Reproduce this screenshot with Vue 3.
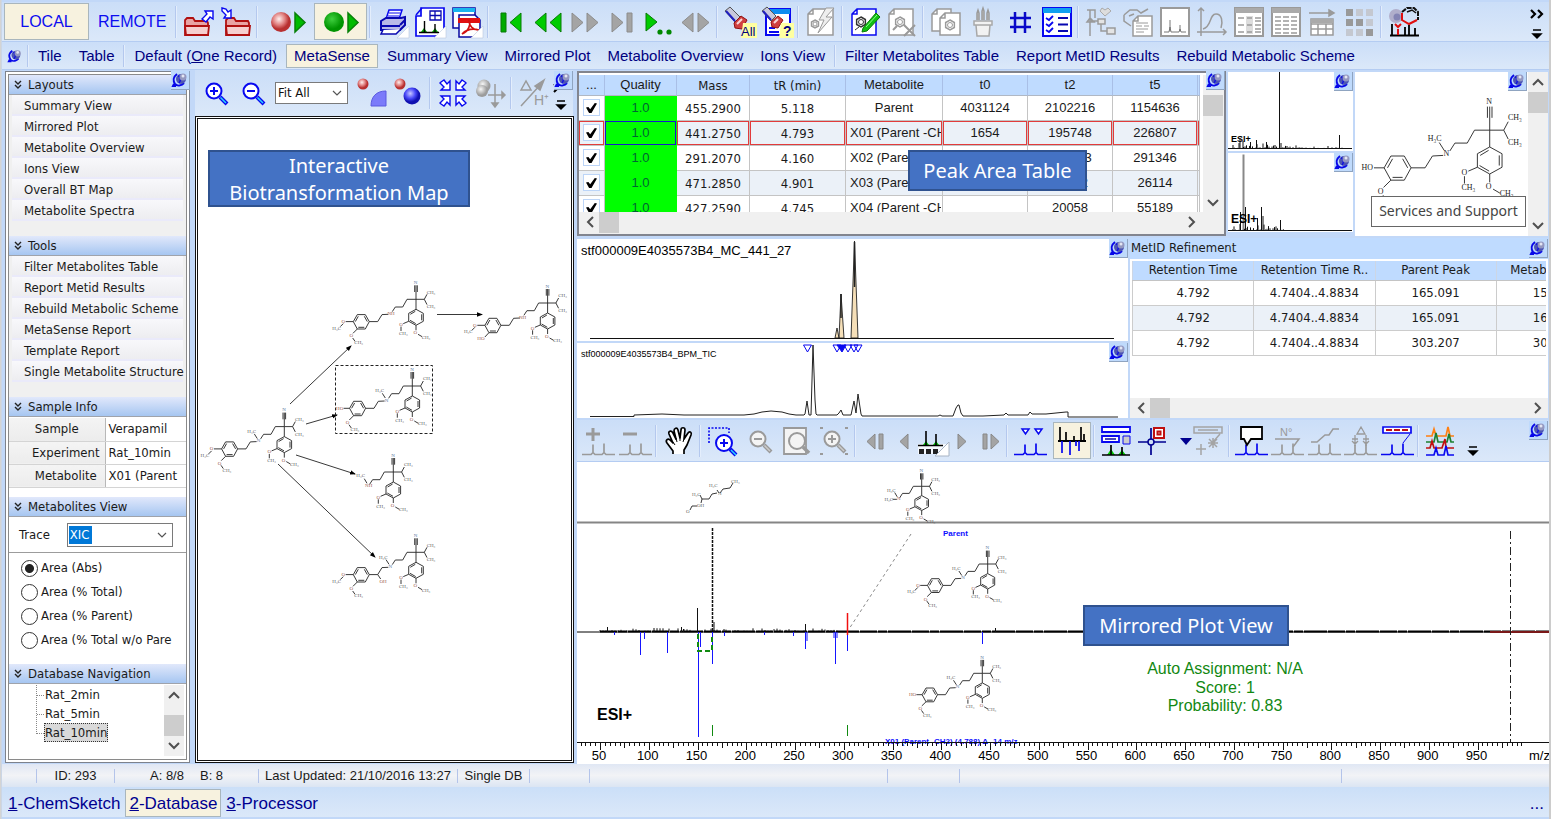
<script setup>
import { h, ref } from 'vue'

const G = '#9a9a9a'
const B = '#0808f0'

const flask = (c, f) => `<circle cx="13" cy="13" r="7.5" fill="${f}" stroke="${c}" stroke-width="2"/><path d="M19 19l7 7" stroke="${c}" stroke-width="4"/><path d="M19.500 19.500l5.500 5.500" stroke="${f === '#f4f4f4' ? '#ccc' : '#2ad4ff'}" stroke-width="1.500"/>`
const peaks = (c) => `<path d="M-1 28.500h9l2-2v-8v8l2 2h7l2-2v-9v9l2 2h9" fill="none" stroke="${c}" stroke-width="1.700"/>`
const page = (x, y, w, hh, c) => `<path d="M${x + 5} ${y}h${w - 5}v${hh}h${-w}v${-(hh - 5)}zM${x + 5} ${y}v5h-5" fill="#fff" stroke="${c}" stroke-width="1.500"/>`
const hexagon = (x, y, r, c) => `<path d="M${x} ${y - r}l${r * 0.87} ${r / 2}v${r}l${-r * 0.87} ${r / 2}l${-r * 0.87} ${-r / 2}v${-r}z" fill="none" stroke="${c}" stroke-width="1.500"/><circle cx="${x}" cy="${y}" r="${r * 0.5}" fill="none" stroke="${c}"/>`
const corner = '<path d="M31 19v12h-12z" fill="#fff" stroke="#b8c8dd" stroke-width=".6"/>'
const folder = (x, y) => `<path d="M${x} ${y + 17}v-15l2-2h6l2 3h12l1 2v12z" fill="#e9a3a3" stroke="#b01010" stroke-width="1.800"/><path d="M${x + 1} ${y + 17}l-1-9h24l-1 9z" fill="#f6cfcf" stroke="#b01010" stroke-width="1.800"/>`

const icons = {
  folderOut: folder(1, 11) + '<path d="M18 12l5-5-2-3h8v8l-3-2-4 5z" fill="#fff" stroke="#0808f0" stroke-width="1.400"/>',
  folderIn: folder(5, 11) + '<path d="M1 1l4 1 2 3 3-2v8H3l2-3-4-4z" fill="#fff" stroke="#0808f0" stroke-width="1.400"/>',
  recordRed: '<circle cx="8" cy="15" r="10" fill="url(#ballRed)"/><path d="M22 6v19l10-9.500z" fill="#0b0" stroke="#088008" stroke-width="1.500"/>',
  recordGreen: '<circle cx="8" cy="15" r="10" fill="url(#ballGreen)"/><path d="M22 6v19l10-9.500z" fill="#0b0" stroke="#088008" stroke-width="1.500"/>',
  printer: '<path d="M8 12L11 3h13l-3 9z" fill="#fff" stroke="#0808f0" stroke-width="1.500"/><path d="M11 6h11M10 9h11" stroke="#0808f0"/><path d="M3 14l5-3h15l4-1v8l-5 5H3z" fill="#b9b9e8" stroke="#0808b0" stroke-width="2"/><path d="M2 19h20M22 18l5-5" stroke="#0808b0" stroke-width="2"/><path d="M5 23l-2 4h15l5-5" fill="#fff" stroke="#0808b0" stroke-width="1.500"/>' + corner,
  report: '<path d="M1 29V9h5V1h23v28z" fill="#fff" stroke="#0808f0" stroke-width="1.700"/><path d="M1 8l6-7" stroke="#0808f0" stroke-width="1.500"/><path d="M15 4h11v9H15zM15 8.500h11M20 4v9" fill="none" stroke="#0808b0" stroke-width="1.300"/><path d="M6 25l3-4 3 4zM17 25l3-4 3 4z" fill="#0a0"/><path d="M4 25.500h20M9.500 14v11M20 17v8" stroke="#000" stroke-width="1.400"/>' + corner,
  pdf: '<path d="M1 1h22v20H1z" fill="#fff" stroke="#0808a0" stroke-width="1.500"/><path d="M1 1h22v4H1z" fill="#19b5ef"/><path d="M7 8h16l5 5v17H7z" fill="#fff" stroke="#0808a0" stroke-width="1.500"/><path d="M6 11h22v5H6z" fill="#e01010"/><path d="M10 27c7-3 9-10 7-14 0 6 4 10 10 10-7-2-13 0-17 4" fill="none" stroke="#d01010" stroke-width="1.700"/>' + corner,
  first: '<path d="M5 6h5v19H5z" fill="#0a0" stroke="#077a07"/><path d="M25 6v19l-11-9.500z" fill="#0c0" stroke="#077a07"/>',
  back: '<path d="M13 6v19L2 15.500zM28 6v19l-11-9.500z" fill="#0c0" stroke="#077a07"/>',
  fwd: '<path d="M2 6v19l11-9.500zM17 6v19l11-9.500z" fill="#a4a4a4" stroke="#8c8c8c"/>',
  last: '<path d="M5 6v19l11-9.500zM20 6h5v19h-5z" fill="#a4a4a4" stroke="#8c8c8c"/>',
  playDots: '<path d="M2 6v18l11-9z" fill="#0c0" stroke="#077a07"/><circle cx="16" cy="25" r="2.600" fill="#080"/><circle cx="25" cy="25" r="2.600" fill="#080"/>',
  leftRight: '<path d="M12 6v19L1 15.500zM17 6v19l11-9.500z" fill="#a4a4a4" stroke="#8c8c8c"/>',
  findAll: '<path d="M0 4l5-4 10 10-5 5z" fill="#c8c8dc" stroke="#555"/><path d="M1 4l9 10" stroke="#2020c0" stroke-width="2"/><path d="M9 16l7-7 6 4-5 9-7-1z" fill="#d04040" stroke="#901010"/><path d="M12 17l5-5" stroke="#f8d8d8" stroke-width="2"/><path d="M18 16h14v15H16z" fill="#ffffa0"/><text x="16" y="29" font-family="Liberation Sans, sans-serif" font-size="13" fill="#000080">All</text>',
  findHelp: '<path d="M4 2h24v26H4z" fill="#fff" stroke="#0808f0" stroke-width="2"/><path d="M4 2h24v5H4z" fill="#0d8cf0"/><path d="M7 25h10M7 21h6" stroke="#0808f0" stroke-width="2"/><path d="M0 4l5-4 9 9-5 5z" fill="#c8c8dc" stroke="#555"/><path d="M1 4l8 9" stroke="#2020c0" stroke-width="2"/><path d="M9 15l7-6 5 4-5 8-6-1z" fill="#d04040" stroke="#901010"/><path d="M12 16l4-4" stroke="#f8d8d8" stroke-width="2"/><path d="M19 16h13v15H17z" fill="#ffffa0"/><text x="21" y="29" font-family="Liberation Sans, sans-serif" font-weight="bold" font-size="14" fill="#000080">?</text>',
  docBolt: page(2, 2, 25, 26, G) + '<path d="M20 1l-7 12h5l-6 13 14-16h-6l8-9z" fill="#eee" stroke="#9a9a9a"/>' + hexagon(9, 17, 4, G),
  docEdit: page(2, 2, 24, 26, B) + hexagon(11, 15, 5, '#333') + '<path d="M5 23l4-3" stroke="#333"/><path d="M13 21L26 6l4 4-13 14-5 1z" fill="#12c012" stroke="#077a07"/><path d="M16 20L27 8" stroke="#8f8"/>',
  docDelete: page(2, 2, 24, 26, G) + hexagon(13, 15, 5, G) + '<path d="M6 23l4-4M17 18l11 11M28 18l-11 11" stroke="#9a9a9a" stroke-width="2"/>',
  docs: page(1, 2, 19, 22, G) + page(9, 6, 20, 22, G) + hexagon(19, 18, 5, G),
  pens: '<path d="M6 14h18v4H6zM8 18h14l-1 11H9z" fill="#f2f2f2" stroke="#a8a8a8" stroke-width="1.500"/><path d="M9 13V6l1-3 1 3v7M14 13V4l1-3 1 3v9M19 13V6l1-3 1 3v7" fill="#ccc" stroke="#9a9a9a" stroke-width="1.500"/>',
  hash: '<path d="M10 5v21M20 5v21M5 11h21M5 20h21" stroke="#0808c8" stroke-width="2.500" fill="none"/>',
  checklist: '<path d="M1 1h28v28H1z" fill="#fff" stroke="#0808f0" stroke-width="2"/><path d="M1 1h28v5H1z" fill="#10a0f0"/><path d="M4 11l3 2 4-4M4 17l3 2 4-4M4 23l3 2 4-4" fill="none" stroke="#0808f0" stroke-width="1.800"/><path d="M16 11h10M16 17.500h10M16 24h10" stroke="#0808b0" stroke-width="2"/>',
  tree: '<path d="M1 3h8v8M4 3v26M4 14h8M4 11l-3 4h7zM15 14v10h6" fill="none" stroke="#9a9a9a" stroke-width="1.500"/><path d="M19 9l-5-5 2-3 3 2 3-2 3 3z" fill="#ddd" stroke="#aaa"/><path d="M12 12h7v5h-7zM21 21h8v6h-8z" fill="#e4e4e4" stroke="#9a9a9a" stroke-width="1.500"/>',
  hexDoc: '<path d="M1 8l6-5h7l4 3 7-4M1 8v6l7 5M6 9l5-2" fill="none" stroke="#9a9a9a" stroke-width="1.500"/>' + page(10, 9, 19, 20, G) + '<path d="M13 16h12M13 19h6M21 19h5M13 22h12M13 25h8" stroke="#9a9a9a"/>',
  chart: '<path d="M1 1h28v28H1z" fill="#fff" stroke="#9a9a9a" stroke-width="2"/><path d="M4 25h5l1-5 1 5h8l1-3 1 3h5M10 13v11M20 18v6" fill="none" stroke="#777"/>',
  curve: '<path d="M4 1v28M0 25h29M26 22l3 3-3 3M1 4l3-3 3 3" fill="none" stroke="#9a9a9a" stroke-width="1.500"/><path d="M6 22c9-2 6-15 13-15 6 0 7 8 5 14" fill="none" stroke="#9a9a9a" stroke-width="1.500"/>',
  form: '<path d="M1 1h28v28H1z" fill="#fff" stroke="#9a9a9a" stroke-width="2"/><path d="M1 1h28v5H1z" fill="#aaa"/><path d="M12 9h7v18h-7z" fill="#ddd"/><path d="M4 11h6M4 18h6M4 25h6M13 11h5M13 18h5M13 25h5M21 11h6M21 14h6M21 18h6M21 22h6M21 25h6" stroke="#9a9a9a" stroke-width="1.500"/>',
  list: '<path d="M1 1h28v28H1z" fill="#fff" stroke="#9a9a9a" stroke-width="2"/><path d="M1 1h28v5H1z" fill="#aaa"/><path d="M4 10h6M4 14h6M4 18h6M4 22h6M4 26h6M12 10h6M12 14h6M12 18h6M12 22h6M12 26h6M20 10h6M20 14h6M20 18h6M20 22h6M20 26h6" stroke="#9a9a9a" stroke-width="1.500"/>',
  insertTable: '<path d="M1 6h21M21 3l5 3-5 3z" fill="#9a9a9a" stroke="#9a9a9a" stroke-width="1.500"/><path d="M3 12h22v16H3zM3 17h22M3 22h22M10 17v11M18 17v11" fill="#fff" stroke="#9a9a9a" stroke-width="1.500"/><path d="M3 12h22v4H3z" fill="#aaa"/>',
  gridDots: '<path d="M1 2h7v7H1zM1 12h7v7H1zM11 12h7v7h-7zM21 22h7v7h-7z" fill="#999"/><path d="M11 2h7v7h-7zM21 2h7v7h-7zM21 12h7v7h-7zM1 22h7v7H1zM11 22h7v7h-7z" fill="#c4c8d0"/>',
  target: '<circle cx="7" cy="9" r="7" fill="#b0aecb"/><circle cx="8" cy="10" r="3.500" fill="#8484b4"/><path d="M13 5l5-4h7l4 4v8" fill="none" stroke="#111" stroke-width="2" stroke-dasharray="5 1"/><path d="M18 5l5-2 4 3" fill="none" stroke="#111" stroke-width="1.500"/><path d="M13 6v7l7 4 8-4" fill="none" stroke="#e01010" stroke-width="2"/><path d="M1 28.500h29M3 17v11M16 20v8M20 18v10M26 21v7" stroke="#000" stroke-width="1.800"/><path d="M9 28v-6M6 17l3 3 3-3" stroke="#e01010" stroke-width="2" fill="none"/>',
  zoomIn: flask(B, '#fff') + '<path d="M9 13h8M13 9v8" stroke="#0808f0" stroke-width="2"/>',
  zoomOut: flask(B, '#fff') + '<path d="M9 13h8" stroke="#0808f0" stroke-width="2"/>',
  ballQuarter: '<circle cx="6" cy="6" r="5.500" fill="url(#ballRed)"/><path d="M14 28c0-9 5-15 15-15v15z" fill="#7b7bfa" stroke="#5a5ae0"/>',
  balls: '<circle cx="6" cy="6" r="5.500" fill="url(#ballRed)"/><circle cx="18" cy="18" r="8.500" fill="url(#ballBlue)"/>',
  collapse: '<path d="M3 4l3-2 3 4 3-3v9H3l3-3-4-4zM27 4l-3-2-3 4-3-3v9h9l-3-3 4-4zM3 26l3 2 3-4 3 3v-9H3l3 3-4 4zM27 26l-3 2-3-4-3 3v-9h9l-3 3 4 4z" fill="#fff" stroke="#0808f0" stroke-width="1.400"/>',
  ballMove: '<circle cx="9" cy="8" r="6.500" fill="url(#ballGray)"/><circle cx="7" cy="13" r="6" fill="url(#ballGray)"/><path d="M20 6v21M13 17h15M17 25l3 4 3-4zM27 14l3 3-3 3z" stroke="#9a9a9a" stroke-width="1.500" fill="#9a9a9a"/>',
  deltaH: '<path d="M2 12l5-9 5 9z" fill="none" stroke="#9a9a9a" stroke-width="1.500"/><path d="M2 28L22 6M25 2l-9 6 5 4z" stroke="#9a9a9a" stroke-width="1.500" fill="#9a9a9a"/><text x="15" y="27" font-family="Liberation Sans, sans-serif" font-size="14" fill="#9a9a9a">H⁺</text>',
  plusPeaks: '<path d="M3 8h14M10 2v13" stroke="#9a9a9a" stroke-width="3"/>' + peaks(G),
  minusPeaks: '<path d="M3 8h14" stroke="#9a9a9a" stroke-width="3"/>' + peaks(G),
  hand: '<path d="M9 28v-3L3 17c-2-3 1-5 3-3l3 3L5 8c-1-3 2-4 4-1l3 6-2-8c0-3 3-4 4-1l2 8 1-8c0-3 4-3 4 0l-1 9 4-6c2-2 4-1 3 2l-4 10-3 5v4" fill="#fff" stroke="#000" stroke-width="1.700" stroke-linejoin="round"/><path d="M9 16l2 3M12 12l1 4M16 11v4M20 13l-1 3" stroke="#000"/>',
  zoomRect: '<path d="M1 17V2h20v5" fill="none" stroke="#0808f0" stroke-width="1.600" stroke-dasharray="2 1.500"/><circle cx="16" cy="17" r="8" fill="#fff" stroke="#0808f0" stroke-width="2"/><path d="M12 17h8M16 13v8" stroke="#0808f0" stroke-width="2"/><path d="M22 23l6 6" stroke="#0808f0" stroke-width="4"/><path d="M23 24l5 5" stroke="#2ad4ff" stroke-width="1.500"/>',
  zoomOutOff: flask(G, '#f4f4f4') + '<path d="M9 13h8" stroke="#9a9a9a" stroke-width="2"/>',
  zoomPage: '<path d="M2 2h22v26H2z" fill="#f4f4f4" stroke="#9a9a9a" stroke-width="1.800"/><circle cx="15" cy="15" r="8" fill="#f4f4f4" stroke="#9a9a9a" stroke-width="2"/><path d="M21 21l6 6" stroke="#9a9a9a" stroke-width="3.500"/>',
  zoomInOff: flask(G, '#f4f4f4') + '<path d="M9 13h8M13 9v8M1 2h3M1 28h3M26 2h3M26 28h3" stroke="#9a9a9a" stroke-width="2"/>',
  navFirst: '<path d="M15 8v15L7 15.500zM19 8h4v15h-4z" fill="#a4a4a4" stroke="#888"/>',
  navPrev: '<path d="M19 8v15l-8-7.500z" fill="#a4a4a4" stroke="#888"/>',
  navPeaks: '<path d="M0 18h30v10H0z" fill="#f4f8fd"/><path d="M5 19l3-4 3 4zM15 19l3-4 3 4z" fill="#0c0"/><path d="M0 19.500h25M8 5v14M18 8v11" stroke="#000" stroke-width="1.600"/><path d="M1 23h5v5H1zM8 23h5v5H8zM15 23h5v5h-5z" fill="#222"/><path d="M31 16v14H17z" fill="#fff" stroke="#a8b4c4"/>',
  navNext: '<path d="M11 8v15l8-7.500z" fill="#a4a4a4" stroke="#888"/>',
  navLast: '<path d="M7 8h4v15H7zM15 8v15l8-7.500z" fill="#a4a4a4" stroke="#888"/>',
  markPeaks: '<path d="M7 3h7l-3.500 5zM20 3h7l-3.500 5z" fill="#fff" stroke="#0808f0" stroke-width="1.500"/>' + peaks(B),
  mirror: '<path d="M1 15h28" stroke="#000" stroke-width="2"/><path d="M3 1v14M9 6v9M17 10v5M24 1v14M27 8v7" stroke="#000" stroke-width="1.700"/><path d="M5 15v12M13 15v14M19 15v5M22 15v10" stroke="#0808f0" stroke-width="1.700"/>',
  panels: '<path d="M1 1h28v5H1zM1 10h17v6H1z" fill="#fff" stroke="#0808f0" stroke-width="1.800"/><path d="M22 10h7v8h-7z" fill="#ccc" stroke="#0808f0"/><path d="M4 13h11" stroke="#0808a0" stroke-width="1.500"/><path d="M6 29l4-6 4 6zM17 29l4-5 4 5z" fill="#0c0"/><path d="M1 29h28M10 19v10M21 21v8" stroke="#000" stroke-width="1.700"/>',
  crosshair: '<path d="M1 16h28M14 2v27" stroke="#000090" stroke-width="1.700"/><circle cx="14" cy="16" r="3" fill="#cfe0f7" stroke="#000090" stroke-width="1.500"/><path d="M17 2h10v10H17zM20.500 5.500h3v3h-3z" fill="#fff" stroke="#c01010" stroke-width="2"/>',
  caret: '<path d="M9 12h12l-6 7z" fill="#000090"/>',
  labelOff: '<path d="M1 1h28v6H1zM5 4h20M27 8l-7 8M15 17h10M20 12v10M16 13l8 8M24 13l-8 8M3 23h10M8 18v11" fill="none" stroke="#a4a4a4" stroke-width="1.500"/>',
  callout: peaks(B) + '<path d="M5 1h21v12H15l-4 6-3-6H5z" fill="#fff" stroke="#000" stroke-width="1.800"/>',
  number: peaks(G) + '<text x="8" y="10" font-family="Liberation Sans, sans-serif" font-size="11" fill="#9a9a9a">N°</text><path d="M3 13h24l-6 8" fill="none" stroke="#9a9a9a" stroke-width="1.500"/>',
  integral: peaks(G) + '<path d="M2 16h6l8-7h4l4-6h6" fill="none" stroke="#9a9a9a" stroke-width="1.500"/>',
  delta: peaks(G) + '<path d="M12 8l4-7 4 7zM10 9v11M7 13h6M7 15l3 3 3-3M21 9v11M18 13h6M18 15l3 3 3-3" fill="none" stroke="#9a9a9a" stroke-width="1.300"/>',
  labelPeak: peaks(B) + '<path d="M1 1h28v6H1z" fill="#fff" stroke="#0808f0" stroke-width="1.700"/><path d="M4 4h22" stroke="#c01010" stroke-width="1.800" stroke-dasharray="6 2"/><path d="M28 8l-7 9" stroke="#0808f0" fill="none"/>',
  overlay: '<g fill="none" stroke-width="1.700"><path d="M1 10h6l2-7 2 7h10l2-9 2 9h4" stroke="#ff7f11"/><path d="M1 16h8l2-9 2 9h9l2-8 2 8h3" stroke="#1e8030"/><path d="M1 22h4l2-7 2 7h8l3-9 1 9h8" stroke="#c01010"/><path d="M1 29h8l2-7 2 7h6l2-9 2 9h6" stroke="#0808f0"/></g>'
}

const mainTools = [
  [['folderOut', 'Open'], ['folderIn', 'Save']],
  [['recordRed', 'Run once', 'wide'], ['recordGreen', 'Run', 'wide active']],
  [['printer', 'Print'], ['report', 'Report'], ['pdf', 'Export PDF']],
  [['first', 'First'], ['back', 'Back'], ['fwd', 'Forward'], ['last', 'Last'], ['playDots', 'Go to'], ['leftRight', 'Swap']],
  [['findAll', 'Find all'], ['findHelp', 'Query']],
  [['docBolt', 'Quick structure']],
  [['docEdit', 'Edit structure'], ['docDelete', 'Delete structure']],
  [['docs', 'Copy'], ['pens', 'Annotate'], ['hash', 'Number'], ['checklist', 'Checklist']],
  [['tree', 'Tree'], ['hexDoc', 'Structure report'], ['chart', 'Spectrum'], ['curve', 'Curve'], ['form', 'Form'], ['list', 'List'], ['insertTable', 'Insert table'], ['gridDots', 'Grid']],
  [['target', 'Assign']]
]

const plotTools = [
  [['plusPeaks', 'Add peaks'], ['minusPeaks', 'Remove peaks']],
  [['hand', 'Pan']],
  [['zoomRect', 'Zoom area'], ['zoomOutOff', 'Zoom out'], ['zoomPage', 'Full view'], ['zoomInOff', 'Previous zoom']],
  [['navFirst', 'First spectrum', 'nav'], ['navPrev', 'Previous spectrum', 'nav'], ['navPeaks', 'Select spectrum', 'nav'], ['navNext', 'Next spectrum', 'nav'], ['navLast', 'Last spectrum', 'nav']],
  [['markPeaks', 'Mark peaks'], ['mirror', 'Mirror', 'framed active']],
  [['panels', 'Panels', 'tight'], ['crosshair', 'Crosshair', 'tight'], ['caret', 'More', 'drop'], ['labelOff', 'Label', 'tight']],
  [['callout', 'Callout', 'tight'], ['number', 'Number peaks', 'tight'], ['integral', 'Integral'], ['delta', 'Difference', 'tight'], ['labelPeak', 'Label peak']],
  [['overlay', 'Overlay', 'tight']]
]

const layoutTabs = [
  ['Tile', 'Table'],
  ['Default (One Record)', 'MetaSense', 'Summary View', 'Mirrored Plot', 'Metabolite Overview', 'Ions View'],
  ['Filter Metabolites Table', 'Report MetID Results', 'Rebuild Metabolic Scheme']
]
const activeTab = ref('MetaSense')

const menus = [
  { title: 'Layouts', items: ['Summary View', 'Mirrored Plot', 'Metabolite Overview', 'Ions View', 'Overall BT Map', 'Metabolite Spectra'] },
  { title: 'Tools', items: ['Filter Metabolites Table', 'Report Metid Results', 'Rebuild Metabolic Scheme', 'MetaSense Report', 'Template Report', 'Single Metabolite Structure'] }
]
const sample = [['Sample', 'Verapamil'], ['Experiment', 'Rat_10min'], ['Metabolite', 'X01 (Parent']]
const areas = ['Area (Abs)', 'Area (% Total)', 'Area (% Parent)', 'Area (% Total w/o Pare']
const area = ref(areas[0])

const peakHead = ['...', 'Quality', 'Mass', 'tR (min)', 'Metabolite', 't0', 't2', 't5', '']
const peakRows = [
  ['455.2900', '5.118', 'Parent', '4031124', '2102216', '1154636'],
  ['441.2750', '4.793', 'X01 (Parent -CH2)', '1654', '195748', '226807'],
  ['291.2070', '4.160', 'X02 (Parent -CH2)', '', '306223', '291346'],
  ['471.2850', '4.901', 'X03 (Parent -CH2)', '', '18512', '26114'],
  ['427.2590', '4.745', 'X04 (Parent -CH2)', '', '20058', '55189']
]
const metHead = ['Retention Time', 'Retention Time R..', 'Parent Peak', 'Metabolite Peak']
const metRows = [
  ['4.792', '4.7404..4.8834', '165.091', '151.075'],
  ['4.792', '4.7404..4.8834', '165.091', '165.091'],
  ['4.792', '4.7404..4.8834', '303.207', '303.207']
]

/* Structure drawings: coordinates are relative to the quaternary carbon. */
const Molecule = (p) => {
  const s = p.s
  const seg = []
  const lab = []
  const line = (...pts) => seg.push('M' + pts.map(([x, y]) => `${(p.x + x * s).toFixed(1)} ${(p.y + y * s).toFixed(1)}`).join('L'))
  const text = (x, y, t, tint) => lab.push([p.x + x * s, p.y + y * s, t, tint])
  const nBlue = '#5878a0'
  const oRed = '#9a5a50'
  const cGrey = '#606064'
  line([0, 30], [0, 0], [0, -42])
  line([-4, -22], [-4, -42])
  line([4, -22], [4, -42])
  text(-1, -51, 'N', nBlue)
  line([0, 0], [25, 0], [33, -15])
  line([25, 0], [33, 16])
  text(45, -22, 'CH₃', cGrey)
  text(45, 22, 'CH₃', cGrey)
  line([0, 0], [-27, 0], [-40, 23], [-62, 23], [-71, 37])
  line([0, 30], [22, 42], [22, 66], [0, 78], [-22, 66], [-22, 42], [0, 30])
  line([17, 45], [17, 63])
  line([-1, 73], [-18, 63])
  line([-17, 45], [-2, 36])
  line([-22, 66], [-38, 73])
  text(-45, 75, 'O', oRed)
  line([-45, 82], [-45, 95])
  text(-38, 102, 'CH₃', cGrey)
  line([0, 78], [0, 93])
  text(-2, 100, 'O', oRed)
  line([6, 105], [18, 112])
  text(30, 113, 'CH₃', cGrey)
  if (p.kind === 'short' || p.kind === 'dimethyl') {
    text(-74, 40, p.kind === 'short' ? 'NH' : 'N', oRed)
    text(-98, p.kind === 'short' ? 10 : 14, 'H₃C', cGrey)
    line([-87, 20], [-79, 34])
    if (p.kind === 'dimethyl') {
      line([-94, 42], [-80, 42])
      text(-106, 42, 'H₃C', cGrey)
    }
  } else {
    if (p.nh) text(-75, 43, 'NH', oRed)
    else {
      text(-77, 42, 'N', nBlue)
      line([-90, 22], [-81, 36])
      text(-98, 14, 'H₃C', cGrey)
    }
    line([-83, 45], [-102, 46], [-115, 67], [-140, 67], [-152, 46], [-176, 46], [-188, 67], [-176, 89], [-152, 89], [-140, 67])
    line([-155, 51], [-146, 67])
    line([-173, 51], [-182, 67])
    line([-173, 84], [-155, 84])
    if (p.kind === 'hoLeft') {
      line([-188, 67], [-206, 67])
      text(-218, 67, 'HO', oRed)
    } else {
      line([-188, 67], [-211, 67])
      text(-218, 66, 'O', oRed)
      line([-218, 73], [-227, 82])
      text(-238, 86, 'H₃C', cGrey)
    }
    if (p.kind === 'hoBottom') {
      line([-176, 89], [-188, 102])
      text(-200, 106, 'HO', oRed)
    } else {
      line([-176, 89], [-189, 102])
      text(-194, 109, 'O', oRed)
      line([-190, 116], [-183, 126])
      text(-172, 130, 'CH₃', cGrey)
    }
    if (p.chainOH) {
      line([-115, 67], [-106, 80])
      text(-99, 86, 'OH', oRed)
    }
  }
  const size = p.big ? 8 : 5
  return h('g', [
    h('path', { d: seg.join(''), fill: 'none', stroke: '#222', 'stroke-width': 0.9 }),
    ...lab.map(([x, y, t, fill]) => h('text', { x, y: y + size / 3, 'font-size': size, 'text-anchor': 'middle', 'font-family': 'Liberation Serif, serif', fill: p.big ? '#222' : fill }, t))
  ])
}
Molecule.props = ['x', 'y', 's', 'kind', 'nh', 'chainOH', 'big']

const third = 1 / 3
const mapMolecules = [
  { x: 416, y: 299.3, s: third, nh: true },
  { x: 547.6, y: 303, s: third, nh: true, kind: 'hoBottom' },
  { x: 412.3, y: 386, s: third, kind: 'hoLeft' },
  { x: 284.3, y: 426.6, s: third },
  { x: 393.3, y: 472, s: third, kind: 'short' },
  { x: 416, y: 552.3, s: third, chainOH: true }
]
const arrows = [[290, 404, 351, 346], [306, 424, 337, 415], [296, 455, 355, 474], [278, 464, 375, 557], [437, 314.5, 482, 314.5]]

const xAt = (mz) => 600 + (mz - 50) * 0.975
const ticks = Array.from({ length: 194 }, (_, i) => 30 + i * 5)
const tickPath = ticks.map((m) => `M${Math.round(xAt(m)) + 0.5} 742v${m % 50 === 0 ? 8 : m % 25 === 0 ? 6 : 4}`).join('')
const labels = Array.from({ length: 19 }, (_, i) => 50 + i * 50)

const jitter = (i) => Math.abs(Math.sin(i * 12.9898) * 43758.5453) % 1
const noise = (x0, x1, y, amp, step) => {
  let d = ''
  for (let x = x0, i = 0; x < x1; x += step, i++) d += `M${x} ${y}v${(-amp * Math.pow(jitter(i + x0), 3)).toFixed(1)}`
  return d
}
const upPeaks = 'M697.500 632V608M714 632V622M805.500 632V624M607.500 632V627M681.500 632V627M683.500 632V629M654 632V628M724 632V629M995.500 632V628'
const downPeaks = 'M640.500 632V655M644.500 632V639M667.500 632V653M698.500 632V737M700.500 632V647M712.500 632V664M724.500 632V636M614.500 632V635M764.500 632V635M793.500 632V636M805.500 632V649M807 632V641M834 632V638M835.500 632V664M837 632V638M847.500 632V651M982.500 632V644'
</script>

<template>
  <div class="app">
    <svg class="defs" width="0" height="0" aria-hidden="true">
      <defs>
        <radialGradient id="ballRed" cx=".4" cy=".35"><stop offset="0" stop-color="#fff0ee" /><stop offset=".6" stop-color="#e08080" /><stop offset="1" stop-color="#b83030" /></radialGradient>
        <radialGradient id="ballGreen" cx=".4" cy=".35"><stop offset="0" stop-color="#40d040" /><stop offset="1" stop-color="#009400" /></radialGradient>
        <radialGradient id="ballBlue" cx=".4" cy=".35"><stop offset="0" stop-color="#c8c8ff" /><stop offset=".6" stop-color="#4848f8" /><stop offset="1" stop-color="#1010b0" /></radialGradient>
        <radialGradient id="ballGray" cx=".4" cy=".35"><stop offset="0" stop-color="#f6f6f6" /><stop offset="1" stop-color="#9c9c9c" /></radialGradient>
        <symbol id="pin" viewBox="0 0 18 18">
          <path d="M6 3c-4 3-4 7-2 10 3 3 7 1 9-1M3 13l-1 2h3" fill="none" stroke="#0808e8" stroke-width="2" />
          <circle cx="10" cy="8" r="5" fill="#4c54b4" />
          <path d="M7 5c3 0 3 5 1 7" stroke="#1010e0" stroke-width="1.500" fill="none" />
          <circle cx="12" cy="6" r="3.500" fill="#9498c0" />
          <circle cx="12" cy="5" r="1.500" fill="#e4e6f2" />
        </symbol>
        <marker id="tip" viewBox="0 0 6 6" refX="5" refY="3" markerWidth="6" markerHeight="6" markerUnits="userSpaceOnUse" orient="auto"><path d="M0 .800L6 3L0 5.200z" /></marker>
      </defs>
    </svg>

    <header class="toolbar main-tools">
      <button class="mode active">LOCAL</button>
      <button class="mode">REMOTE</button>
      <template v-for="(group, g) in mainTools" :key="g">
        <i class="sep"></i>
        <button v-for="t in group" :key="t[0]" class="tool" :class="t[2]" :aria-label="t[1]"><svg viewBox="0 0 30 30" v-html="icons[t[0]]"></svg></button>
      </template>
      <button class="more" aria-label="More tools">
        <svg viewBox="0 0 18 34"><path d="M3 5l4 4-4 4M10 5l4 4-4 4" fill="none" stroke="#000" stroke-width="2.200" /><path d="M5 25h8M5 29h8l-4 4z" stroke="#000" stroke-width="1.500" /></svg>
      </button>
    </header>

    <nav class="toolbar tabs">
      <svg class="tab-pin" viewBox="0 0 18 18"><use href="#pin" /></svg>
      <template v-for="(group, g) in layoutTabs" :key="g">
        <i class="sep thin"></i>
        <button v-for="t in group" :key="t" class="tab" :class="{ active: t === activeTab }" @click="activeTab = t">
          <template v-if="t.startsWith('Default')">Default (<u>O</u>ne Record)</template>
          <template v-else>{{ t }}</template>
        </button>
      </template>
    </nav>

    <main class="workspace">
      <aside class="sidebar">
        <button class="pin" aria-label="Pin sidebar"><svg viewBox="0 0 18 18"><use href="#pin" /></svg></button>
        <div class="side-inner">
          <section v-for="m in menus" :key="m.title" class="menu">
            <h2><svg class="chev" viewBox="0 0 8 10"><path d="M1 1l3 3 3-3M1 5l3 3 3-3" /></svg>{{ m.title }}</h2>
            <ul>
              <li v-for="i in m.items" :key="i"><a href="#">{{ i }}</a></li>
            </ul>
          </section>
          <section class="sample">
            <h2><svg class="chev" viewBox="0 0 8 10"><path d="M1 1l3 3 3-3M1 5l3 3 3-3" /></svg>Sample Info</h2>
            <table>
              <tbody>
                <tr v-for="r in sample" :key="r[0]"><th scope="row">{{ r[0] }}</th><td>{{ r[1] }}</td></tr>
              </tbody>
            </table>
          </section>
          <section class="view">
            <h2><svg class="chev" viewBox="0 0 8 10"><path d="M1 1l3 3 3-3M1 5l3 3 3-3" /></svg>Metabolites View</h2>
            <div class="trace">
              <label for="trace">Trace</label>
              <span class="combo xic">
                <select id="trace"><option>XIC</option><option>TIC</option></select>
                <svg viewBox="0 0 10 6"><path d="M1 1l4 4 4-4" /></svg>
              </span>
            </div>
            <div class="radios">
              <label v-for="a in areas" :key="a"><input v-model="area" type="radio" name="area" :value="a">{{ a }}</label>
            </div>
          </section>
          <section class="database">
            <h2><svg class="chev" viewBox="0 0 8 10"><path d="M1 1l3 3 3-3M1 5l3 3 3-3" /></svg>Database Navigation</h2>
            <div class="tree">
              <ul>
                <li><a href="#">Rat_2min</a></li>
                <li><a href="#">Rat_5min</a></li>
                <li class="current"><a href="#">Rat_10min</a></li>
              </ul>
              <div class="vscroll">
                <svg viewBox="0 0 20 20"><path d="M5 13l5-5 5 5" /></svg>
                <i class="thumb low"></i>
                <svg viewBox="0 0 20 20"><path d="M5 7l5 5 5-5" /></svg>
              </div>
            </div>
          </section>
        </div>
      </aside>

      <section class="map">
        <div class="toolbar map-tools">
          <button class="tool" aria-label="Zoom in"><svg viewBox="0 0 30 30" v-html="icons.zoomIn"></svg></button>
          <button class="tool" aria-label="Zoom out"><svg viewBox="0 0 30 30" v-html="icons.zoomOut"></svg></button>
          <span class="combo fit">
            <select aria-label="Zoom level"><option>Fit All</option><option>100%</option></select>
            <svg viewBox="0 0 10 6"><path d="M1 1l4 4 4-4" /></svg>
          </span>
          <button class="tool" aria-label="Collapse node"><svg viewBox="0 0 30 30" v-html="icons.ballQuarter"></svg></button>
          <button class="tool" aria-label="Expand node"><svg viewBox="0 0 30 30" v-html="icons.balls"></svg></button>
          <i class="sep"></i>
          <button class="tool" aria-label="Collapse all"><svg viewBox="0 0 30 30" v-html="icons.collapse"></svg></button>
          <button class="tool" aria-label="Move node"><svg viewBox="0 0 30 30" v-html="icons.ballMove"></svg></button>
          <i class="sep"></i>
          <button class="tool" aria-label="Mass difference"><svg viewBox="0 0 30 30" v-html="icons.deltaH"></svg></button>
          <button class="map-more" aria-label="More map tools"><svg viewBox="0 0 18 34"><path d="M1 4l4 4-4 4" fill="none" stroke="#000" stroke-width="2" /><path d="M4 21h8M4 25h8l-4 4z" stroke="#000" stroke-width="1.500" /></svg></button>
        </div>
        <button class="pin" aria-label="Pin map"><svg viewBox="0 0 18 18"><use href="#pin" /></svg></button>
        <div class="canvas">
          <svg viewBox="198 119 373 641" preserveAspectRatio="xMinYMin meet" role="img" aria-label="Biotransformation map">
            <path v-for="a in arrows" :key="a.join()" :d="`M${a[0]} ${a[1]}L${a[2]} ${a[3]}`" stroke="#222" stroke-width=".9" marker-end="url(#tip)" />
            <rect x="335.500" y="365.500" width="97" height="68" fill="none" stroke="#222" stroke-dasharray="3 2" />
            <Molecule v-for="(m, i) in mapMolecules" :key="i" v-bind="m" />
          </svg>
          <p class="callout map-note">Interactive<br>Biotransformation Map</p>
        </div>
      </section>

      <section class="right">
        <div class="row-one">
          <div class="peak-panel">
            <button class="pin" aria-label="Pin peak table"><svg viewBox="0 0 18 18"><use href="#pin" /></svg></button>
            <div class="peak-body">
              <div class="clip">
                <table class="peaks">
                  <colgroup><col class="c-check"><col class="c-quality"><col class="c-mass"><col class="c-tr"><col class="c-met"><col class="c-t"><col class="c-t"><col class="c-t"><col class="c-end"></colgroup>
                  <thead><tr><th v-for="(c, i) in peakHead" :key="i" scope="col" :class="{ ui: i === 2 || i === 3 }">{{ c }}</th></tr></thead>
                  <tbody>
                    <tr v-for="(r, i) in peakRows" :key="r[0]" :class="{ chosen: i === 1, even: i % 2 }">
                      <td class="check"><span><input type="checkbox" checked :aria-label="'Select ' + r[2]"></span></td>
                      <td class="quality"><span>1.0</span></td>
                      <td v-for="(c, k) in r" :key="k" :class="{ ui: k < 2, name: k === 2 && i > 0 }"><span>{{ c }}</span></td>
                      <td><span></span></td>
                    </tr>
                  </tbody>
                </table>
              </div>
              <div class="vscroll">
                <i class="thumb"></i>
                <svg viewBox="0 0 20 20"><path d="M5 8l5 5 5-5" /></svg>
              </div>
            </div>
            <div class="hscroll"><svg viewBox="0 0 20 20"><path d="M14 5l-5 5 5 5" /></svg><i class="thumb"></i><svg class="end" viewBox="0 0 20 20"><path d="M7 5l5 5-5 5" /></svg></div>
            <p class="callout peak-note">Peak Area Table</p>
          </div>

          <div class="minis">
            <div class="plot">
              <button class="pin" aria-label="Pin spectrum"><svg viewBox="0 0 18 18"><use href="#pin" /></svg></button>
              <svg viewBox="1228 72 125 79" role="img" aria-label="Spectrum">
                <path :d="'M1228 148.500h124M1279.500 72v76M1339.500 135v13M1256.500 140v8M1266.500 142v6M1281 143v5M1240 138v10M1243 141v7M1250.500 142v6' + noise(1233, 1300, 148, 5, 1.5) + noise(1300, 1350, 148, 2, 2)" stroke="#111" fill="none" />
                <text x="1231" y="142" class="esi" font-size="9">ESI+</text>
              </svg>
            </div>
            <div class="plot">
              <button class="pin" aria-label="Pin spectrum"><svg viewBox="0 0 18 18"><use href="#pin" /></svg></button>
              <svg viewBox="1228 153 125 79" role="img" aria-label="Spectrum">
                <path d="M1243.500 154.500v76" stroke="#888" stroke-width="2" />
                <path :d="'M1228 230.500h124M1245.500 207v23M1240.500 212v18M1257.500 218v12M1261.500 207v23M1263 216v14M1280.500 220v10' + noise(1231, 1285, 230, 6, 1.5)" stroke="#111" fill="none" />
                <text x="1231" y="223" class="esi" font-size="12">ESI+</text>
              </svg>
            </div>
          </div>

          <div class="structure">
            <div class="plot">
              <button class="pin" aria-label="Pin structure"><svg viewBox="0 0 18 18"><use href="#pin" /></svg></button>
              <svg viewBox="1355 72 173 164" preserveAspectRatio="xMinYMin meet" role="img" aria-label="Structure">
                <Molecule :x="1490.5" :y="130.5" :s="0.565" kind="hoLeft" :big="true" />
              </svg>
              <p class="hint">Services and Support</p>
            </div>
            <div class="vscroll">
              <svg viewBox="0 0 20 20"><path d="M5 13l5-5 5 5" /></svg>
              <i class="thumb"></i>
              <svg class="bottom" viewBox="0 0 20 20"><path d="M5 7l5 5 5-5" /></svg>
            </div>
          </div>
        </div>

        <div class="row-two">
          <div class="chroms">
            <div class="plot">
              <button class="pin" aria-label="Pin chromatogram"><svg viewBox="0 0 18 18"><use href="#pin" /></svg></button>
              <svg viewBox="577 239 551 102" role="img" aria-label="Extracted chromatogram">
                <path d="M835 338l2-10 2 10 2-44 3 44zM851 338l3.500-97 3.500 97z" fill="#f5dfb8" stroke="#222" stroke-width=".9" />
                <path d="M841 294v24M854.500 242v45" stroke="#222" stroke-width="1.500" />
                <path d="M590 338.500h524" stroke="#111" />
                <text x="581" y="255" font-size="13">stf000009E4035573B4_MC_441_27</text>
              </svg>
            </div>
            <div class="plot">
              <button class="pin" aria-label="Pin chromatogram"><svg viewBox="0 0 18 18"><use href="#pin" /></svg></button>
              <svg viewBox="577 343 551 75" role="img" aria-label="Total ion chromatogram">
                <path d="M590 416.500h44v-1.500l28-1 22 1h60l10-1 8-2 9-1 11 1 7 2 7 1h8l1-1 2-13 2 14h2l2-70 2 55 1 14 1 1h20l2-2 2-3 2 5h8l3-14 2 12 2-19 3 20 1 2h76l2-1 2 1h11l3-8 2-3h1l2 8 2 3h20l21-1 2-2 2 2h20l2-3 2 2h14l20-2h2v5h50" fill="none" stroke="#222" />
                <path d="M803.500 345h8l-4 7zM833 345h8l-4 7zM844 345h8l-4 7zM850 345h8l-4 7zM854 345h8l-4 7z" fill="#fff" stroke="#0808f0" />
                <path d="M837 345h9l-4 7z" fill="#0808f0" stroke="#0808f0" />
                <text x="581" y="357" font-size="9">stf000009E4035573B4_BPM_TIC</text>
              </svg>
            </div>
          </div>

          <div class="metid">
            <button class="pin" aria-label="Pin refinement"><svg viewBox="0 0 18 18"><use href="#pin" /></svg></button>
            <h2>MetID Refinement</h2>
            <div class="met-clip">
              <table>
                <thead><tr><th v-for="c in metHead" :key="c" scope="col">{{ c }}</th></tr></thead>
                <tbody><tr v-for="(r, i) in metRows" :key="i"><td v-for="(c, k) in r" :key="k">{{ c }}</td></tr></tbody>
              </table>
            </div>
            <div class="hscroll"><svg viewBox="0 0 20 20"><path d="M14 5l-5 5 5 5" /></svg><i class="thumb"></i><svg class="end" viewBox="0 0 20 20"><path d="M7 5l5 5-5 5" /></svg></div>
          </div>
        </div>

        <div class="mirror">
          <div class="toolbar plot-tools">
            <template v-for="(group, g) in plotTools" :key="g">
              <i v-if="g" class="sep"></i>
              <button v-for="t in group" :key="t[0]" class="tool" :class="t[2]" :aria-label="t[1]"><svg viewBox="0 0 30 30" v-html="icons[t[0]]"></svg></button>
            </template>
            <button class="plot-more" aria-label="More plot tools"><svg viewBox="0 0 12 12"><path d="M2 2h8M2 6h8l-4 4z" stroke="#000" stroke-width="1.500" /></svg></button>
          </div>
          <button class="pin" aria-label="Pin plot"><svg viewBox="0 0 18 18"><use href="#pin" /></svg></button>
          <div class="plot">
            <svg viewBox="577 462 972 302" preserveAspectRatio="xMinYMin meet" role="img" aria-label="Mirrored spectra">
              <path d="M577 522.500h972" stroke="#858585" stroke-width="2" />
              <path d="M577 632h972" stroke="#000" />
              <path d="M600 631.500h950" stroke="#000" stroke-width="2" stroke-dasharray="17 1 9 1 23 1" />
              <path d="M1490 632h59" stroke="#7a1818" stroke-width="2" />
              <path :d="noise(600, 840, 631, 3, 3) + upPeaks" stroke="#111" fill="none" />
              <path :d="downPeaks" stroke="#1515ff" />
              <path d="M712.500 528v104" stroke="#111" stroke-width="1.500" stroke-dasharray="3 1" />
              <path d="M847.500 613v22" stroke="#f01010" stroke-width="1.500" />
              <path d="M698 634v17h14v-17" fill="none" stroke="#118a11" stroke-width="2" stroke-dasharray="5 3" />
              <path d="M712.500 725v11M847.500 725v11" stroke="#118a11" />
              <path d="M911 534L849 629" stroke="#888" stroke-dasharray="3 3" />
              <path d="M1510.500 531v211" stroke="#222" stroke-dasharray="8 3 2 3" />
              <g fill="none" stroke="#222" stroke-width=".9"><path d="M733 483l-3 5-7 1-3 4M717 490l2 3M717 493l-5 1-3 5h-7l-2-4M702 499l-1 4M697 506h-5l-2 4" /></g>
              <g font-size="5" font-family="Liberation Serif, serif" fill="#666"><text x="731" y="483">CH₃</text><text x="709" y="487">H₃C</text><text x="718" y="495">N</text><text x="692" y="496">H₃C</text><text x="697" y="507">OH</text><text x="686" y="513">O</text></g>
              <Molecule :x="921.7" :y="486.3" :s="0.31" kind="dimethyl" />
              <Molecule :x="987.7" :y="564" :s="0.32" />
              <Molecule :x="982.3" :y="673.3" :s="0.32" kind="hoLeft" />
              <text x="943" y="536" font-size="8" font-weight="bold" fill="#1010ff">Parent</text>
              <text x="885" y="744" font-size="8" font-weight="bold" fill="#1010ff">X01 (Parent -CH2) (4.788) Δ -14 m/z</text>
              <g font-size="16" fill="#128812" text-anchor="middle"><text x="1225" y="674">Auto Assignment: N/A</text><text x="1225" y="693">Score: 1</text><text x="1225" y="711">Probability: 0.83</text></g>
              <text x="597" y="720" font-size="16" class="esi">ESI+</text>
              <path d="M577 742.500h972" stroke="#111" />
              <path :d="tickPath" stroke="#111" />
              <g font-size="13" text-anchor="middle"><text v-for="l in labels" :key="l" :x="xAt(l) - 1" y="760">{{ l }}</text></g>
              <text x="1529" y="760" font-size="13">m/z</text>
            </svg>
            <p class="callout plot-note">Mirrored Plot View</p>
          </div>
        </div>
      </section>
    </main>

    <footer class="status">
      <span></span><span>ID: 293</span><span class="records"><b>A: 8/8</b><b>B: 8</b></span><span>Last Updated: 21/10/2016 13:27</span><span>Single DB</span><span></span><span></span><span></span><span></span><span></span>
    </footer>
    <nav class="windows">
      <button><u>1</u>-ChemSketch</button>
      <button class="active"><u>2</u>-Database</button>
      <button><u>3</u>-Processor</button>
      <button class="dots" aria-label="More windows">...</button>
    </nav>
  </div>
</template>

<style>
body { background: #fff; }
</style>

<style scoped>
* { box-sizing: border-box; }
.app {
  --ui: "DejaVu Sans Condensed", "Noto Sans", sans-serif;
  --arial: "Liberation Sans", Arial, sans-serif;
  display: flex; flex-direction: column; min-height: 100vh; padding: 2px;
  background: linear-gradient(90deg, #d4d4d4 1px, #c2d8f8 2px, #c2d8f8 calc(100% - 2px), #ccc calc(100% - 2px));
  color: #1a1a1a; font: 13px/16px var(--ui);
}
.defs { position: absolute; }
button { margin: 0; padding: 0; border: 1px solid transparent; background: none; color: inherit; font: inherit; }
svg { display: block; overflow: visible; }
h2, p, ul { margin: 0; padding: 0; font-size: 13px; font-weight: normal; list-style: none; }
a { color: inherit; text-decoration: none; }
.toolbar { display: flex; align-items: center; background: linear-gradient(#cbdef8, #dbe8f9); }
.sep { flex: none; width: 2px; height: 32px; margin: 0 3px 0 2px; background: linear-gradient(90deg, #b4c8ee 1px, #e4eefc 1px); }
.sep.thin { height: 22px; margin: 0; }
.tool { flex: none; display: grid; place-items: center; width: 37px; height: 37px; }
.tool svg { width: 30px; height: 30px; }
.tool.wide { width: 53px; }
.tool.nav { width: 29px; }
.tool.tight { width: 36px; }
.tool.drop { width: 20px; }
.tool.framed { width: 38px; margin-left: 5px; }
.active { border-color: #a9b6bd; background: #f7f2df; }

.main-tools { height: 40px; border-bottom: 1px solid #b4ccf2; padding: 0 2px; }
.mode { height: 37px; padding: 0 8px; color: #0c0cf0; font: 16px/20px var(--arial); }
.mode.active { width: 85px; }
.more { width: 18px; height: 36px; margin-left: auto; margin-right: 2px; }
.more svg, .map-more svg { width: 18px; height: 34px; }
.main-tools .mode + .sep { margin-left: 0; }
.tabs { gap: 1px; height: 28px; padding-left: 5px; border-bottom: 1px solid #b4ccf2; }
.tab-pin { width: 16px; height: 16px; margin-right: 3px; }
.tab { height: 24px; padding: 0 7px; color: #000080; font: 15px/20px var(--arial); white-space: nowrap; }

.workspace { flex: 1; display: grid; grid-template-columns: 190px 384px minmax(0, 1fr); }
.pin { position: absolute; z-index: 2; top: 1px; right: 1px; width: 19px; height: 19px; border: 0; border-right: 1px solid #8fa4c0; border-bottom: 1px solid #8fa4c0; background: #bfdafc; }
.pin svg { width: 18px; height: 18px; }

.sidebar { position: relative; margin: 1px 2px 1px 3px; padding: 2px; border: 1px solid #7d828c; background: #fff; display: flex; }
.sidebar > .pin { top: -1px; right: -1px; }
.side-inner { flex: 1; min-width: 0; border: 1px solid #8a8a8a; background: #f0f0f0; display: flex; flex-direction: column; overflow: hidden; }
.side-inner h2 { display: flex; align-items: center; height: 20px; padding-left: 5px; border-bottom: 1px solid #9fa3ab; background: linear-gradient(#e1e8fb, #a6c6f1); }
.chev { width: 8px; height: 10px; margin-right: 6px; fill: none; stroke: #222; stroke-width: 1.4; }
.menu { padding-bottom: 15px; }
.menu li { height: 21px; margin: 0 3px; border-bottom: 2px solid #eaeafa; background: linear-gradient(#f8f8fb, #ededf0); white-space: nowrap; }
.menu a { display: block; padding: 2px 0 0 12px; line-height: 17px; }
.sample { min-height: 100px; background: #fff; }
.sample table { width: 100%; margin-top: 1px; border-collapse: collapse; table-layout: fixed; }
.sample th, .sample td { height: 23px; padding: 0 3px; border-bottom: 1px solid #d4d4d4; font-weight: normal; text-align: left; white-space: nowrap; overflow: hidden; }
.sample th { width: 96px; padding: 0 2px 0 20px; border-right: 1px solid #b8b8b8; background: linear-gradient(#f4f4f4, #ececec); text-align: center; }
.sample tr:first-child th { padding-left: 2px; }
.view { background: #fff; }
.trace { display: flex; align-items: center; gap: 17px; height: 36px; padding: 0 13px 0 10px; border-bottom: 1px solid #9c9c9c; }
.combo { position: relative; display: block; }
.combo select { appearance: none; width: 100%; border: 1px solid #7a7a7a; border-radius: 0; background: #fff; color: #111; font: 13px/18px var(--ui); }
.combo svg { position: absolute; right: 6px; top: 50%; width: 10px; height: 6px; margin-top: -3px; pointer-events: none; fill: none; stroke: #555; stroke-width: 1.2; }
.xic { flex: 1; }
.xic select { height: 24px; padding: 0 2px; color: #fff; background: linear-gradient(#0078d7, #0078d7) 1px 2px / 23px 18px no-repeat #fff; }
.radios { padding: 3px 0 12px 12px; }
.radios label { display: flex; align-items: center; gap: 3px; height: 24px; white-space: nowrap; }
.radios input { appearance: none; flex: none; width: 17px; height: 17px; margin: 0; border: 1px solid #333; border-radius: 50%; background: #fff; }
.radios input:checked { background: radial-gradient(circle, #222 4px, #fff 5px); }
.database { flex: 1; background: #fff; }
.tree { display: flex; justify-content: space-between; padding: 1px 2px 0 27px; }
.tree ul { border-left: 1px dotted #888; height: 49px; }
.tree li { display: flex; height: 19px; line-height: 19px; }
.tree li::before { content: ""; width: 7px; height: 10px; border-bottom: 1px dotted #888; }
.tree a { padding: 0 1px; }
.tree .current a { background: #d9d9d9; outline: 1px dotted #333; outline-offset: -1px; }
.vscroll { flex: none; display: flex; flex-direction: column; width: 20px; background: #f0f0f0; }
.tree .vscroll { height: 71px; justify-content: space-between; }
.vscroll svg, .hscroll svg { flex: none; width: 20px; height: 20px; fill: none; stroke: #505050; stroke-width: 2; }
.thumb { flex: none; width: 20px; height: 21px; background: #cdcdcd; }
.thumb.low { margin-top: 10px; }
.hscroll { display: flex; height: 20px; background: #f0f0f0; }
.hscroll .end { margin-left: auto; }

.map { position: relative; display: flex; flex-direction: column; padding: 0 2px 1px 3px; }
.map > .pin { right: 3px; }
.map-tools { height: 46px; padding-left: 2px; margin: 0 1px 0 0; }
.fit { width: 73px; margin: 0 5px 0 4px; }
.fit select { height: 22px; padding: 0 2px; }
.map-more { width: 18px; height: 36px; margin-top: 8px; }
.canvas { position: relative; flex: 1; border: 3px double #111; background: #fff; }
.callout { position: absolute; display: grid; place-items: center; border: 2px solid #2f528f; background: #4472c4; color: #fff; font: 20px/27px "Noto Sans", sans-serif; text-align: center; white-space: nowrap; }
.map-note { left: 10px; top: 31px; width: 262px; height: 57px; }
.peak-note { right: 137px; bottom: 43px; width: 179px; height: 41px; }
.plot-note { right: 260px; top: 143px; width: 206px; height: 41px; }

.right { display: grid; grid-template-rows: 168px 182px minmax(0, 1fr); }
.row-one { display: grid; grid-template-columns: minmax(0, 1fr) 127px 195px; }
.peak-panel { position: relative; margin: 1px 1px 2px; border: 2px solid #82858f; background: #f0f0f0; display: flex; flex-direction: column; }
.peak-panel > .pin { top: -2px; right: -1px; }
.peak-panel .hscroll { height: 22px; padding-right: 22px; }
.peak-body { flex: 1; min-height: 0; display: flex; background: #fff; padding-top: 2px; }
.peak-body .vscroll { padding-top: 20px; width: 21px; margin-left: 2px; justify-content: space-between; }
.clip { flex: 1; min-width: 0; overflow: hidden; }
.clip, .met-clip { position: relative; }
.peaks { position: absolute; border-collapse: separate; border-spacing: 0; table-layout: fixed; width: 621px; font: 13px/18px var(--arial); }
.c-check { width: 26px; } .c-quality { width: 72px; } .c-mass { width: 73px; } .c-tr { width: 96px; } .c-met { width: 97px; } .c-t { width: 85px; } .c-end { width: 2px; }
.peaks th { height: 21px; padding: 0; border-right: 1px solid #a9bfe6; border-bottom: 1px solid #b0b8c4; background: #bfdbff; font-weight: normal; }
.ui { font-family: var(--ui); }
.peaks .ui { padding-top: 2px; }
.peaks td { height: 25px; padding: 0; border-right: 1px solid #c4c4c4; border-bottom: 1px solid #c4c4c4; text-align: center; overflow: hidden; white-space: nowrap; }
.peaks td > span { display: block; height: 24px; padding: 0 4px; line-height: 22px; border: 1px solid transparent; overflow: hidden; }
.peaks td.ui { padding: 0; }
.peaks td.ui > span { line-height: 24px; }
.peaks td.name > span { padding: 0 3px; text-align: left; }
.peaks .even td { background: #ebf1f8; }
.peaks tbody td.quality { background: #0f0; color: #063; border-color: #0f0; }
.peaks .chosen td > span { border-color: #e23b3b; }
.peaks .chosen .quality > span { border-color: #1818d0; }
.peaks .check > span { padding: 2px 0; }
.check input { appearance: none; display: block; width: 17px; height: 17px; margin: 0 auto; border: 1px solid #bcd5f8; background: #fff; }
.check input::before { content: ""; display: block; width: 11px; height: 10px; margin: 3px 2px; background: #000; clip-path: polygon(0 45%, 22% 40%, 38% 62%, 80% 0, 100% 5%, 50% 100%, 28% 100%); }

.minis, .structure, .chroms { display: flex; flex-direction: column; gap: 2px; }
.minis { padding: 2px 1px; }
.plot { position: relative; background: #fff; font-family: var(--arial); }
.plot > svg { width: 100%; overflow: hidden; }
.plot > .pin { top: 0; right: 0; }
.esi { font-weight: bold; }
.structure { flex-direction: row; gap: 1px; margin: 2px 1px; background: #fff; }
.structure .plot { flex: 1; }
.structure .vscroll .bottom { margin-top: auto; }
.hint { position: absolute; right: 1px; bottom: 9px; width: 155px; height: 31px; border: 1px solid #666; background: #fff; color: #444; font: 14px/28px "Noto Sans", sans-serif; text-align: center; white-space: nowrap; }

.row-two { display: grid; grid-template-columns: minmax(0, 1fr) 420px; }
.chroms { padding: 1px 1px 2px; }
.metid { position: relative; display: flex; flex-direction: column; margin: 0 1px 2px; background: #fff; overflow: hidden; }
.metid > .pin { right: 0; }
.metid h2 { height: 21px; padding-left: 1px; background: #bfdbff; line-height: 19px; }
.met-clip { flex: 1; margin: 2px 2px 0; overflow: hidden; }
.met-clip table { position: absolute; width: 486px; border-collapse: collapse; table-layout: fixed; }
.metid th { height: 19px; padding: 0; border: 1px solid #cdd6e4; border-top: 0; border-bottom: 1px solid #c4c4c4; background: #bfdbff; font-weight: normal; white-space: nowrap; }
.metid td { height: 25px; padding: 0; border: 1px solid #ccc; text-align: center; }
.metid tbody tr:nth-child(2) td { background: #ebf1f8; }

.mirror { position: relative; display: flex; flex-direction: column; padding-left: 1px; }
.plot-tools { height: 42px; padding-left: 2px; border-bottom: 1px solid #b4ccf2; }
.plot-more { width: 14px; margin: 20px 0 0 8px; }
.plot-more svg { width: 12px; height: 12px; }
.mirror .plot { flex: 1; }

.status { display: flex; align-items: center; height: 23px; background: linear-gradient(#e0e7f4, #f2f3f6 50%, #dbe5f3); font: 13px/14px var(--arial); }
.status span { width: 60px; height: 14px; border-right: 1px solid #b4c4ea; white-space: nowrap; text-align: center; }
.status span:nth-child(1) { width: 35px; }
.status span:nth-child(2) { width: 78px; }
.status span:nth-child(3) { width: 144px; }
.status span:nth-child(4) { width: 199px; }
.status span:nth-child(5) { width: 72px; }
.status span:nth-child(7) { width: 298px; }
.status span:nth-child(8) { width: 72px; }
.status span:nth-child(9) { width: 382px; }
.status span:nth-child(10) { border: 0; flex: 1; }
.status b { font-weight: normal; }
.status .records { display: flex; gap: 16px; padding-left: 35px; }
.windows { display: flex; align-items: flex-end; height: 30px; background: linear-gradient(#cbdff8, #dbe8f9); color: #000090; font: 17px/20px var(--arial); }
.windows button { height: 28px; padding: 2px 3px 0; }
.windows button:first-child { margin-left: 2px; }
.windows button + button { margin-left: 1px; }
.windows .dots { margin-left: auto; margin-right: 1px; }
</style>
